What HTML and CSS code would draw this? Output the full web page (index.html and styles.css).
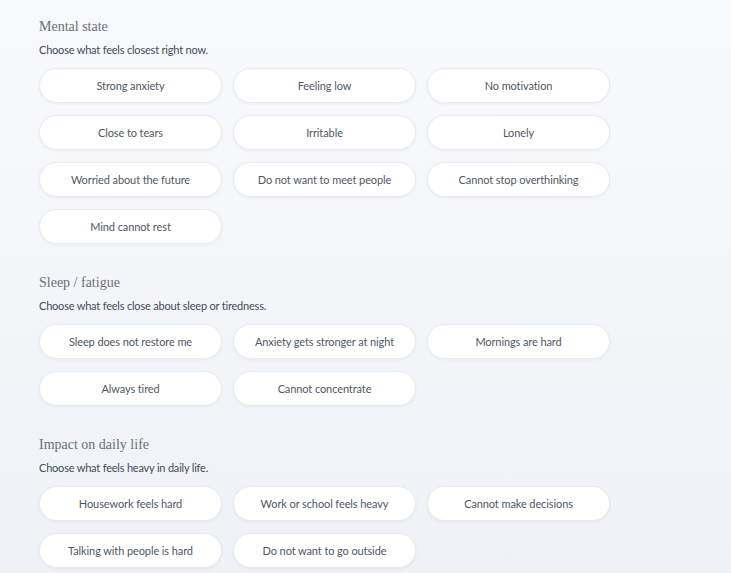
FILE: index.html
```html
<!DOCTYPE html>
<html lang="en">
<head>
    <meta charset="UTF-8">
    <meta name="viewport" content="width=device-width, initial-scale=1.0">
    <title>Check-in</title>
    <link rel="stylesheet" href="styles.css">
</head>
<body>
    <main class="checkin">
        <section class="group">
            <h3>Mental state</h3>
            <p class="hint">Choose what feels closest right now.</p>
            <div class="choices">
                <button class="chip">Strong anxiety</button>
                <button class="chip">Feeling low</button>
                <button class="chip">No motivation</button>
                <button class="chip">Close to tears</button>
                <button class="chip">Irritable</button>
                <button class="chip">Lonely</button>
                <button class="chip">Worried about the future</button>
                <button class="chip">Do not want to meet people</button>
                <button class="chip">Cannot stop overthinking</button>
                <button class="chip">Mind cannot rest</button>
            </div>
        </section>

        <section class="group">
            <h3>Sleep / fatigue</h3>
            <p class="hint">Choose what feels close about sleep or tiredness.</p>
            <div class="choices">
                <button class="chip">Sleep does not restore me</button>
                <button class="chip">Anxiety gets stronger at night</button>
                <button class="chip">Mornings are hard</button>
                <button class="chip">Always tired</button>
                <button class="chip">Cannot concentrate</button>
            </div>
        </section>

        <section class="group">
            <h3>Impact on daily life</h3>
            <p class="hint">Choose what feels heavy in daily life.</p>
            <div class="choices">
                <button class="chip">Housework feels hard</button>
                <button class="chip">Work or school feels heavy</button>
                <button class="chip">Cannot make decisions</button>
                <button class="chip">Talking with people is hard</button>
                <button class="chip">Do not want to go outside</button>
            </div>
        </section>
    </main>
</body>
</html>
```

FILE: styles.css
```css
body {
    margin: 0;
    min-height: 100vh;
    font-family: Lato, "Noto Sans", sans-serif;
    color: #4a5361;
    background: linear-gradient(to bottom, #f8f9fb, #eef2f6);
}

.checkin {
    padding: 18px 39px 20px;
}

.group + .group {
    margin-top: 30px;
}

.group h3 {
    margin: 0;
    font-family: "Liberation Serif", serif;
    font-weight: normal;
    font-size: 14px;
    line-height: 18px;
    color: #6b7078;
}

.hint {
    margin: 6px 0 11px;
    font-size: 11px;
    line-height: 15px;
    letter-spacing: -0.2px;
    color: #434b58;
}

.choices {
    display: grid;
    grid-template-columns: repeat(3, 183px);
    column-gap: 11px;
    row-gap: 12px;
}

.chip {
    height: 35px;
    padding: 0 12px;
    border: 1px solid #e7ebf0;
    border-radius: 999px;
    background: #fff;
    box-shadow: 0 1px 3px rgba(30, 45, 70, 0.05);
    font-family: inherit;
    font-size: 11px;
    letter-spacing: -0.1px;
    color: #4f5866;
    cursor: pointer;
}

.chip:hover {
    border-color: #d5dde6;
}
```
